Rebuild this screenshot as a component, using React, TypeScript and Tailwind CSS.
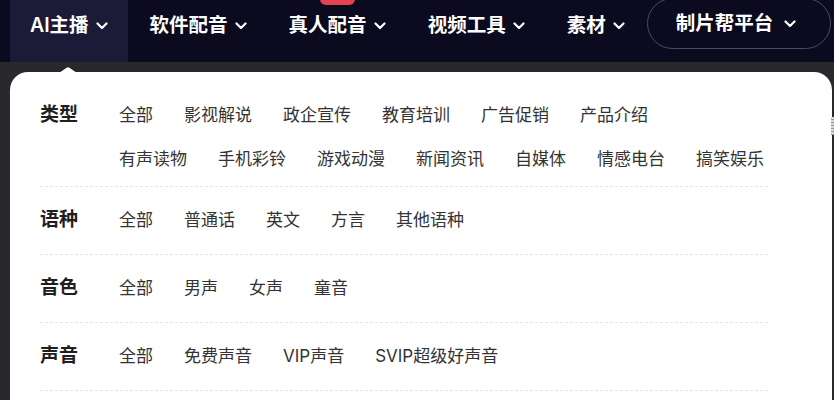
const font = { fontFamily: 'Inter, "Noto Sans CJK SC", sans-serif' };

function Chevron() {
  return (
    <svg width="12" height="8" viewBox="0 0 12 8" className="shrink-0" fill="none">
      <path d="M1.5 1.5 6 6l4.5-4.5" stroke="currentColor" strokeWidth="2.2" strokeLinecap="round" strokeLinejoin="round" />
    </svg>
  );
}

function NavItem({ label, active, badge }: { label: string; active?: boolean; badge?: boolean }) {
  return (
    <div
      className={`relative flex h-[62px] shrink-0 items-center gap-[7px] whitespace-nowrap px-[20px] pb-[11px] text-[19.5px] font-semibold text-white ${
        active ? "bg-[#1b1a37]" : ""
      }`}
    >
      {badge && <span className="absolute -top-[12px] left-[51px] h-[17px] w-[35px] rounded-[6px] bg-[#e8414f]" />}
      <span>{label}</span>
      <Chevron />
    </div>
  );
}

const sections: { label: string; rows: string[][]; className: string }[] = [
  {
    label: "类型",
    rows: [
      ["全部", "影视解说", "政企宣传", "教育培训", "广告促销", "产品介绍"],
      ["有声读物", "手机彩铃", "游戏动漫", "新闻资讯", "自媒体", "情感电台", "搞笑娱乐"],
    ],
    className: "pt-[31px] pb-[15px]",
  },
  { label: "语种", rows: [["全部", "普通话", "英文", "方言", "其他语种"]], className: "pt-[21px] pb-[22px]" },
  { label: "音色", rows: [["全部", "男声", "女声", "童音"]], className: "pt-[21px] pb-[22px]" },
  { label: "声音", rows: [["全部", "免费声音", "VIP声音", "SVIP超级好声音"]], className: "pt-[21px] pb-[22px]" },
];

function Section({ label, rows, className }: { label: string; rows: string[][]; className: string }) {
  return (
    <div className={`flex border-b border-dashed border-[#e6e6e6] ${className}`}>
      <div className="w-[79px] shrink-0 text-[19px] font-bold leading-[24px] text-[#1f1f1f]">{label}</div>
      <div className="flex flex-1 flex-col gap-[20px] text-[17px] leading-[24px] text-[#333]">
        {rows.map((row, i) => (
          <div key={i} className="flex gap-[31px] whitespace-nowrap">
            {row.map((it) => (
              <span key={it}>{it}</span>
            ))}
          </div>
        ))}
      </div>
    </div>
  );
}

export default function App() {
  return (
    <div className="relative h-[400px] w-[834px] overflow-hidden bg-[#29292d]" style={font}>
      {/* top nav */}
      <nav className="flex h-[62px] items-start gap-[2px] bg-[#0b0a1e] pl-[10px]">
        <NavItem label="AI主播" active />
        <NavItem label="软件配音" />
        <NavItem label="真人配音" badge />
        <NavItem label="视频工具" />
        <NavItem label="素材" />
        <div className="-mt-[2px] flex h-[51px] w-[184px] shrink-0 items-center gap-[11px] whitespace-nowrap rounded-full border border-[#4a4968] pl-[28px] text-[19.5px] font-semibold text-white">
          <span>制片帮平台</span>
          <Chevron />
        </div>
      </nav>

      {/* dropdown panel */}
      <div className="pl-[10px] pr-[2px] pt-[10px]">
        <div className="relative rounded-[18px] bg-white pb-[40px] pl-[30px] pr-[64px]">
          <svg className="absolute -top-[5px] left-[49px]" width="18" height="6" viewBox="0 0 18 6">
            <path d="M0 6 7.6 0.8a2.4 2.4 0 0 1 2.8 0L18 6Z" fill="#fff" />
          </svg>
          {sections.map((s) => (
            <Section key={s.label} {...s} />
          ))}
        </div>
      </div>

      {/* scroll grip at the page edge */}
      <div className="absolute right-0 top-[117px] h-[18px] w-[3px] bg-[repeating-linear-gradient(#d8d8d8_0_2px,#9a9a9a_2px_3px)]" />
    </div>
  );
}
